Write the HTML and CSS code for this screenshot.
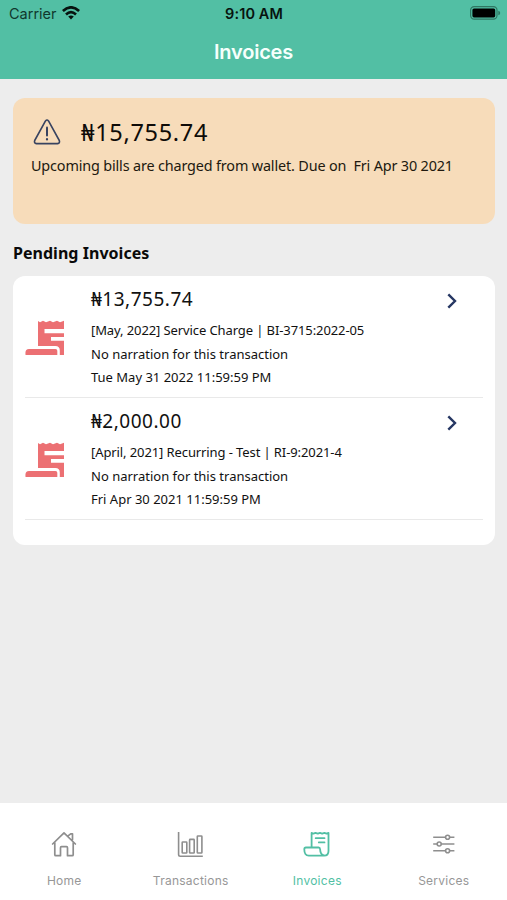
FILE: index.html
```html
<!DOCTYPE html>
<html lang="en">
<head>
<meta charset="utf-8">
<title>Invoices</title>
<link rel="stylesheet" href="styles.css">
</head>
<body>
<div class="app">
  <header class="header">
    <div class="status">
      <div class="carrier"><span class="carrier-name">Carrier</span>
        <svg class="wifi" viewBox="0 0 18 14"><g fill="none" stroke="#07130f" stroke-width="2.7"><path d="M.9 5Q9-2.3 17.1 5"/><path d="M4 8.4Q9 3.9 14 8.4"/></g><path d="M6.2 10.6Q9 8.5 11.8 10.6L9 13.6Z" fill="#07130f"/></svg>
      </div>
      <div class="clock">9:10 AM</div>
      <svg class="battery" viewBox="0 0 31 14"><rect x=".6" y=".6" width="26.4" height="12.6" rx="3.6" fill="none" stroke="#2f7763" stroke-width="1.2"/><rect x="2.4" y="2.4" width="22.8" height="9" rx="1.6" fill="#000"/><path d="M28.3 4.7Q30.2 5.2 30.2 7T28.3 9.3Z" fill="#2f7763"/></svg>
    </div>
    <h1 class="title">Invoices</h1>
  </header>
  <main class="content">
    <section class="notice">
      <div class="notice-head">
        <svg class="warning" viewBox="0 0 28 26" fill="none" stroke="#384360" stroke-width="1.6" stroke-linecap="round" stroke-linejoin="round"><path d="M12.5 1.9Q14 .1 15.5 1.9L26.3 21.5Q27.2 24.3 24.6 24.6H3.4Q.8 24.3 1.7 21.5Z"/><path d="M14 8.4v8" stroke-width="2"/><path d="M14 20.2v.2" stroke-width="2.2"/></svg>
        <span class="notice-amount">₦15,755.74</span>
      </div>
      <p class="notice-text">Upcoming bills are charged from wallet. Due on&nbsp; Fri Apr 30 2021</p>
    </section>
    <h2 class="section-title">Pending Invoices</h2>
    <section class="list">
      <article class="row">
        <svg class="receipt" viewBox="0 0 40 36"><path fill="#ec7073" d="M13 1l2 1.2L18 .8l3 1.4 4-1.4 3 1.4 4-1.4 3 1.4 4-1.4V9H19.5v4.2H39V17H26v3.8h13V35h-4.2v-4.5q0-4.5-4.4-4.5H13Z"/><path fill="#ec7073" d="M4 29h26.5q1.8 0 1.8 1.8V35H.6q-1-6 3.4-6Z"/></svg>
        <div class="details">
          <div class="amount">₦13,755.74</div>
          <p class="line reference">[May, 2022] Service Charge | BI-3715:2022-05</p>
          <p class="line">No narration for this transaction</p>
          <p class="line">Tue May 31 2022 11:59:59 PM</p>
        </div>
        <svg class="chevron" viewBox="0 0 10 16"><path d="M1.3 1.3L8 8l-6.7 6.7" fill="none" stroke="#263763" stroke-width="2.4"/></svg>
      </article>
      <article class="row">
        <svg class="receipt" viewBox="0 0 40 36"><path fill="#ec7073" d="M13 1l2 1.2L18 .8l3 1.4 4-1.4 3 1.4 4-1.4 3 1.4 4-1.4V9H19.5v4.2H39V17H26v3.8h13V35h-4.2v-4.5q0-4.5-4.4-4.5H13Z"/><path fill="#ec7073" d="M4 29h26.5q1.8 0 1.8 1.8V35H.6q-1-6 3.4-6Z"/></svg>
        <div class="details">
          <div class="amount">₦2,000.00</div>
          <p class="line reference">[April, 2021] Recurring - Test | RI-9:2021-4</p>
          <p class="line">No narration for this transaction</p>
          <p class="line">Fri Apr 30 2021 11:59:59 PM</p>
        </div>
        <svg class="chevron" viewBox="0 0 10 16"><path d="M1.3 1.3L8 8l-6.7 6.7" fill="none" stroke="#263763" stroke-width="2.4"/></svg>
      </article>
    </section>
  </main>
  <nav class="tabs">
    <a class="tab"><svg class="tab-icon" viewBox="0 0 28 28" fill="none" stroke="#8e8e8e" stroke-width="1.7" stroke-linejoin="round" stroke-linecap="round"><path d="M2.6 14L14 2.8 25.4 14M4.8 12.5v12.2q0 1 1 1h4.7v-8q0-1 1-1h5q1 0 1 1v8h4.7q1 0 1-1V12.5M18.4 5.6L20.7 3.8h1.8v5.8"/></svg><span class="tab-label">Home</span></a>
    <a class="tab"><svg class="tab-icon" viewBox="0 0 28 28" fill="none" stroke="#8e8e8e" stroke-width="1.6"><path d="M1.6 2v22.6q0 1.7 1.7 1.7h22.5"/><rect x="5.2" y="12" width="4.6" height="11" rx=".6"/><rect x="12.6" y="9.4" width="4.6" height="13.6" rx=".6"/><rect x="20.3" y="6" width="4.6" height="17" rx=".6"/></svg><span class="tab-label">Transactions</span></a>
    <a class="tab active"><svg class="tab-icon" viewBox="0 0 28 28" fill="none" stroke="#52bfa4" stroke-width="1.8" stroke-linejoin="round" stroke-linecap="round"><path d="M8.6 17.4V2.9l1.8.8 2.1-.8 2.3.8 2.2-.8 2.2.8 2.2-.8 2.2.8 1.9-.8V21q0 4.6-4.3 4.6H5.8Q1.3 25.6 1.3 19.2q0-1.7 1.6-1.7h12.7q1.4 0 1.5 1.7.2 5.5 3.9 6.2M12.7 8.2h8.8M15.8 12.4h5.7"/></svg><span class="tab-label">Invoices</span></a>
    <a class="tab"><svg class="tab-icon" viewBox="0 0 28 28" fill="none" stroke="#8e8e8e" stroke-width="1.6"><path d="M3.2 7.2h12.4m4 0h4.8M3.2 14h4m4 0h13.2M3.2 20.8h12.4m4 0h4.8"/><circle cx="17.6" cy="7.2" r="2"/><circle cx="9.2" cy="14" r="2"/><circle cx="17.6" cy="20.8" r="2"/></svg><span class="tab-label">Services</span></a>
  </nav>
</div>
</body>
</html>
```

FILE: styles.css
```css
* { box-sizing: border-box; }
body { margin: 0; background: #ededed; font-family: "Noto Sans", sans-serif; color: #111; }
h1, h2, p { margin: 0; }
svg { display: block; flex: none; }
.app { width: 507px; height: 900px; display: flex; flex-direction: column; overflow: hidden; }
.header { height: 79px; background: #52bfa4; font-family: Inter, sans-serif; }
.status { height: 27px; padding: 0 6px 0 9px; display: grid; grid-template-columns: 1fr auto 1fr; align-items: center; }
.carrier { display: flex; align-items: center; gap: 5px; font-size: 14.5px; color: #10382d; }
.wifi { width: 18px; height: 14px; margin-top: -1px; }
.clock { font-size: 14.5px; font-weight: 600; color: #07130f; letter-spacing: .1px; margin-right: 2px; }
.battery { width: 31px; height: 14px; justify-self: end; margin-top: -1px; }
.title { text-align: center; font-size: 20px; font-weight: 600; line-height: 50px; color: #f6fffc; letter-spacing: -.2px; }
.content { flex: 1; padding: 19px 12px 0 13px; }
.notice { height: 126px; border-radius: 12px; background: #f7dcba; padding: 20px 18px; }
.notice-head { display: flex; align-items: center; height: 28px; gap: 20px; padding-left: 2px; }
.warning { width: 28px; height: 26px; }
.notice-amount { font-size: 23.5px; line-height: 28px; letter-spacing: .7px; color: #0e0b08; }
.notice-text { margin-top: 9px; font-size: 14.4px; line-height: 22px; letter-spacing: -.15px; white-space: nowrap; color: #21190f; }
.section-title { margin-top: 18px; font-size: 16px; line-height: 22px; font-weight: 700; letter-spacing: .03px; color: #0a0a0a; }
.list { margin-top: 12px; height: 269px; border-radius: 12px; background: #fff; padding: 0 12px; }
.row { height: 122px; border-bottom: 1px solid #e9e9e9; display: flex; }
.receipt { width: 40px; height: 36px; margin-top: 44px; }
.details { flex: 1; margin-left: 26px; padding-top: 10px; white-space: nowrap; }
.amount { font-size: 19px; line-height: 26px; letter-spacing: .5px; margin-bottom: 7px; }
.line { font-size: 13px; line-height: 23.6px; }
.reference { letter-spacing: -.1px; }
.chevron { width: 10px; height: 16px; margin: 17px 26px 0 0; }
.tabs { height: 97px; background: #fff; display: grid; grid-template-columns: repeat(4, 1fr); padding-left: 1px; font-family: Inter, sans-serif; }
.tab { display: flex; flex-direction: column; align-items: center; padding-top: 27px; color: #979797; }
.tab-icon { width: 28px; height: 28px; }
.tab-label { margin-top: 15px; font-size: 12px; line-height: 16px; letter-spacing: .25px; }
.active { color: #52bfa4; }
```
